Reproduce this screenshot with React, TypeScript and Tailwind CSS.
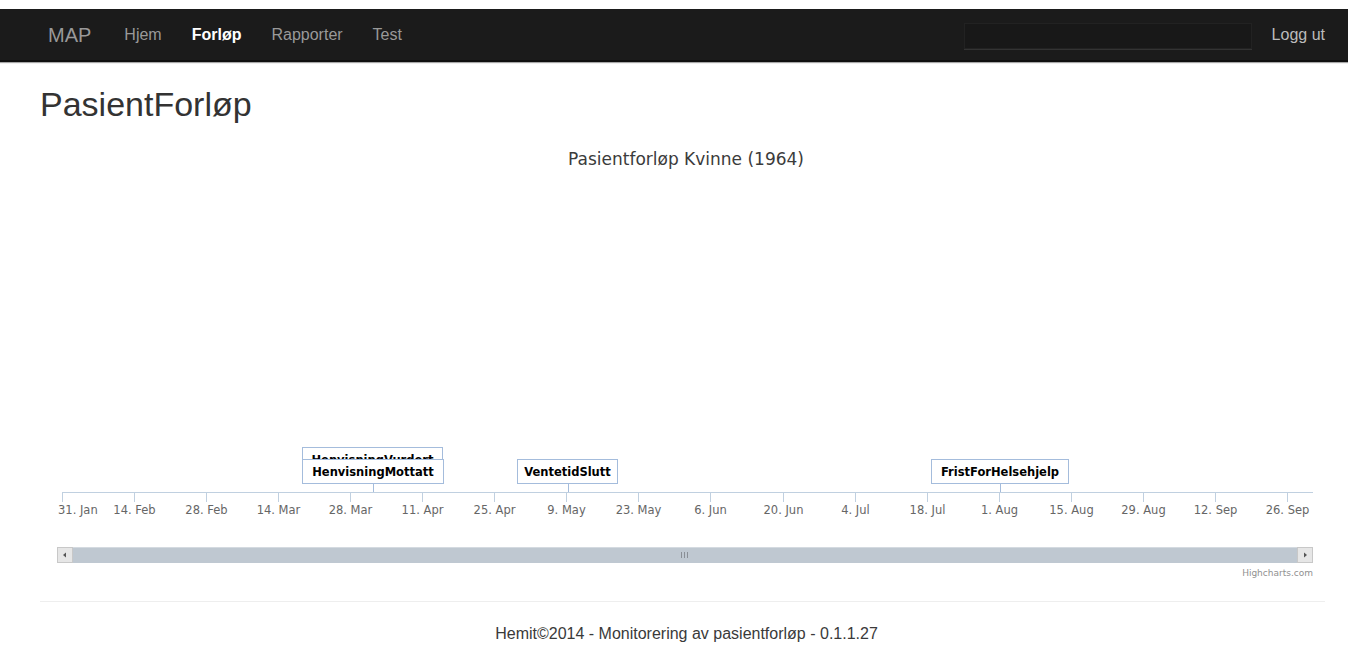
import React from 'react';

const navLinks = [
  { label: 'Hjem', active: false },
  { label: 'Forløp', active: true },
  { label: 'Rapporter', active: false },
  { label: 'Test', active: false },
];

const tickLabels = [
  '31. Jan', '14. Feb', '28. Feb', '14. Mar', '28. Mar', '11. Apr',
  '25. Apr', '9. May', '23. May', '6. Jun', '20. Jun', '4. Jul',
  '18. Jul', '1. Aug', '15. Aug', '29. Aug', '12. Sep', '26. Sep',
];

const AXIS_Y = 354;
const AXIS_LEFT = 22;
const AXIS_RIGHT = 1273;
const TICK_STEP = 72.05;

type Flag = { title: string; x: number; y: number; w: number; pin?: number };

// flags in paint order: the later one covers the earlier one
const flags: Flag[] = [
  { title: 'HenvisningVurdert', x: 262, y: 309, w: 140 },
  { title: 'HenvisningMottatt', x: 262, y: 321, w: 141, pin: 333 },
  { title: 'VentetidSlutt', x: 477, y: 321, w: 100, pin: 528 },
  { title: 'FristForHelsehjelp', x: 891, y: 321, w: 137, pin: 960 },
];

const Navbar = () => (
  <div className="flex h-[53px] items-center bg-[#1b1b1b] border-b-2 border-[#0f0f0f] shadow-[0_1px_1px_rgba(0,0,0,0.35)] pl-[48px] pr-[23px]">
    <span className="text-[20px] text-[#999] mr-[18px]">MAP</span>
    {navLinks.map((link) => (
      <span
        key={link.label}
        className={`px-[15px] text-[16px] ${
          link.active ? 'text-white font-bold' : 'text-[#999]'
        }`}
      >
        {link.label}
      </span>
    ))}
    <div className="ml-auto flex items-center">
      <input
        type="text"
        className="mt-[3px] h-[26px] w-[288px] bg-[#181818] border border-[#222] shadow-[0_1px_0_#333] outline-none"
      />
      <span className="ml-[20px] text-[16px] text-[#bbb]">Logg ut</span>
    </div>
  </div>
);

const TimelineChart = () => (
  <svg width="100%" height="447" className="block" style={{ fontFamily: '"DejaVu Sans", Verdana, sans-serif' }}>
    <text x="646" y="27" textAnchor="middle" fontSize="17" fill="#3b3b3b">
      Pasientforløp Kvinne (1964)
    </text>

    {/* x axis */}
    <line x1={AXIS_LEFT} y1={AXIS_Y + 0.5} x2={AXIS_RIGHT} y2={AXIS_Y + 0.5} stroke="#C0D0E0" />
    {tickLabels.map((label, i) => {
      const x = Math.round(AXIS_LEFT + TICK_STEP * i) + 0.5;
      return (
        <g key={label}>
          <line x1={x} y1={AXIS_Y} x2={x} y2={AXIS_Y + 10} stroke="#C0D0E0" />
          <text
            x={i === 0 ? 18 : x}
            y={AXIS_Y + 22}
            textAnchor={i === 0 ? 'start' : 'middle'}
            fontSize="11.5"
            fill="#666"
          >
            {label}
          </text>
        </g>
      );
    })}

    {/* flags */}
    {flags.map((f) => (
      <g key={f.title}>
        {f.pin && (
          <line x1={f.pin + 0.5} y1={f.y + 25} x2={f.pin + 0.5} y2={AXIS_Y} stroke="#A4BCDC" />
        )}
        <rect x={f.x + 0.5} y={f.y + 0.5} width={f.w} height={24} fill="#fff" stroke="#A4BCDC" />
        <text
          x={f.x + f.w / 2 + 0.5}
          y={f.y + 17}
          textAnchor="middle"
          fontSize="11.5"
          fontWeight="bold"
          fill="#000"
        >
          {f.title}
        </text>
      </g>
    ))}

    {/* scrollbar */}
    <rect x="17" y="409" width="1256" height="16" fill="#BFC8D1" />
    <line x1="17" y1="409.5" x2="1273" y2="409.5" stroke="#d4dae0" />
    <rect x="17.5" y="409.5" width="15" height="15" fill="#e6e6e6" stroke="#c8c8c8" />
    <polygon points="23,417 26,414.5 26,419.5" fill="#555" />
    <rect x="1257.5" y="409.5" width="15" height="15" fill="#e6e6e6" stroke="#c8c8c8" />
    <polygon points="1267,417 1264,414.5 1264,419.5" fill="#555" />
    <line x1="641.5" y1="414" x2="641.5" y2="420" stroke="#8a8f96" />
    <line x1="644.5" y1="414" x2="644.5" y2="420" stroke="#8a8f96" />
    <line x1="647.5" y1="414" x2="647.5" y2="420" stroke="#8a8f96" />

    <text x="1273" y="438" textAnchor="end" fontSize="9" fill="#909090">
      Highcharts.com
    </text>
  </svg>
);

export default function App() {
  return (
    <div className="min-h-screen bg-white pt-[9px] font-['Liberation_Sans',Arial,sans-serif]">
      <Navbar />
      <div className="pl-[40px] pr-[15px]">
        <h1 className="mt-[22px] text-[34px] leading-[40px] text-[#333]">PasientForløp</h1>
        <div className="mt-[14px]">
          <TimelineChart />
        </div>
        <hr className="mt-[16px] mr-[8px] border-t border-b border-t-[#eee] border-b-white" />
        <footer className="mt-[21px] text-center text-[16px] leading-[20px] text-[#3a3a3a]">
          Hemit©2014 - Monitorering av pasientforløp - 0.1.1.27
        </footer>
      </div>
    </div>
  );
}
